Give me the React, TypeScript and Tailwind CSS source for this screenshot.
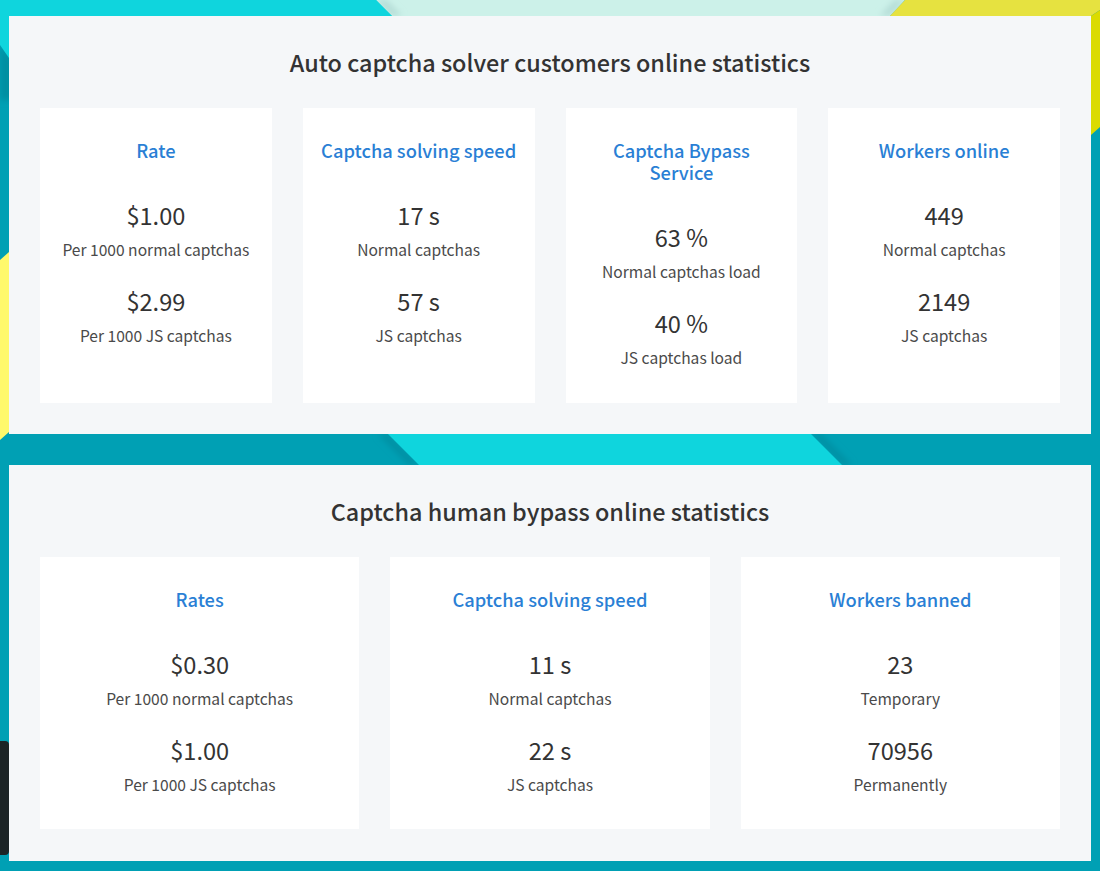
const font = "font-['Noto_Sans_CJK_JP','Noto_Sans',sans-serif]";

type Stat = { value: string; label: string };
type CardData = { title: string; stats: Stat[] };

const autoCards: CardData[] = [
  { title: 'Rate', stats: [{ value: '$1.00', label: 'Per 1000 normal captchas' }, { value: '$2.99', label: 'Per 1000 JS captchas' }] },
  { title: 'Captcha solving speed', stats: [{ value: '17 s', label: 'Normal captchas' }, { value: '57 s', label: 'JS captchas' }] },
  { title: 'Captcha Bypass Service', stats: [{ value: '63 %', label: 'Normal captchas load' }, { value: '40 %', label: 'JS captchas load' }] },
  { title: 'Workers online', stats: [{ value: '449', label: 'Normal captchas' }, { value: '2149', label: 'JS captchas' }] },
];

const humanCards: CardData[] = [
  { title: 'Rates', stats: [{ value: '$0.30', label: 'Per 1000 normal captchas' }, { value: '$1.00', label: 'Per 1000 JS captchas' }] },
  { title: 'Captcha solving speed', stats: [{ value: '11 s', label: 'Normal captchas' }, { value: '22 s', label: 'JS captchas' }] },
  { title: 'Workers banned', stats: [{ value: '23', label: 'Temporary' }, { value: '70956', label: 'Permanently' }] },
];

function Card({ card }: { card: CardData }) {
  return (
    <div className="bg-white px-4 pt-[31px] text-center">
      <h3 className="mb-[39px] text-[18.3px] leading-[22px] font-medium text-[#2a7fd5]">{card.title}</h3>
      {card.stats.map((s) => (
        <div key={s.label} className="h-[85.5px]">
          <div className="text-[23.6px] leading-[30px] text-[#333333]">{s.value}</div>
          <div className="mt-[7px] text-[15.6px] leading-6 text-[#4a4a4a]">{s.label}</div>
        </div>
      ))}
    </div>
  );
}

function Background() {
  return (
    <svg className="absolute inset-0" width="1100" height="871" viewBox="0 0 1100 871">
      <defs>
        <filter id="soft" x="-20%" y="-20%" width="140%" height="140%">
          <feGaussianBlur stdDeviation="3" />
        </filter>
      </defs>
      <rect width="1100" height="871" fill="#00a0b4" />
      {/* darker edges under the coloured shapes */}
      <polygon points="0,45 14,60 14,100 0,100" fill="#008fa2" filter="url(#soft)" />
      <polygon points="0,0 400,0 400,16 9,16 9,58 0,45" fill="#0fd5dd" />
      <polygon points="376,0 905,0 890,16 392,16" fill="#ccf1e9" />
      <polygon points="376,0 392,16 402,16 386,0" fill="#b4dcd6" filter="url(#soft)" />
      <polygon points="905,0 890,16 880,16 895,0" fill="#b4dcd6" filter="url(#soft)" />
      <polygon points="376,0 340,0 340,16 392,16" fill="#0fd5dd" />
      <polygon points="905,0 1100,0 1100,10 1091,16 890,16" fill="#e6e240" />
      <polygon points="1091,16 1100,10 1100,127 1091,135" fill="#dbdb00" />
      <polygon points="0,260 9,252 9,432 0,440" fill="#fff96b" />
      <polygon points="378,434 388,434 419,465 409,465" fill="#0090a3" filter="url(#soft)" />
      <polygon points="811,434 821,434 852,465 842,465" fill="#0090a3" filter="url(#soft)" />
      <polygon points="388,434 811,434 842,465 419,465" fill="#0fd5dd" />
    </svg>
  );
}

export default function App() {
  return (
    <div className={`relative h-[871px] w-[1100px] overflow-hidden ${font}`}>
      <Background />
      <div className="absolute left-0 top-[741px] h-[114px] w-[9px] rounded-r bg-[#1c2426]" />
      <div className="relative flex flex-col gap-[31px] px-[9px] pt-4">
        <section className="h-[418px] bg-[#f5f7f9] px-[31px] pt-[29px]">
          <h2 className="mb-7 h-[35px] text-center text-[23.4px] leading-[34px] font-medium text-[#333333]">
            Auto captcha solver customers online statistics
          </h2>
          <div className="grid h-[295px] grid-cols-4 gap-[31px]">
            {autoCards.map((c) => (
              <Card key={c.title} card={c} />
            ))}
          </div>
        </section>
        <section className="h-[396px] bg-[#f5f7f9] px-[31px] pt-[29px]">
          <h2 className="mb-7 h-[35px] text-center text-[23.4px] leading-[34px] font-medium text-[#333333]">
            Captcha human bypass online statistics
          </h2>
          <div className="grid h-[272px] grid-cols-3 gap-[31px]">
            {humanCards.map((c) => (
              <Card key={c.title} card={c} />
            ))}
          </div>
        </section>
      </div>
    </div>
  );
}
